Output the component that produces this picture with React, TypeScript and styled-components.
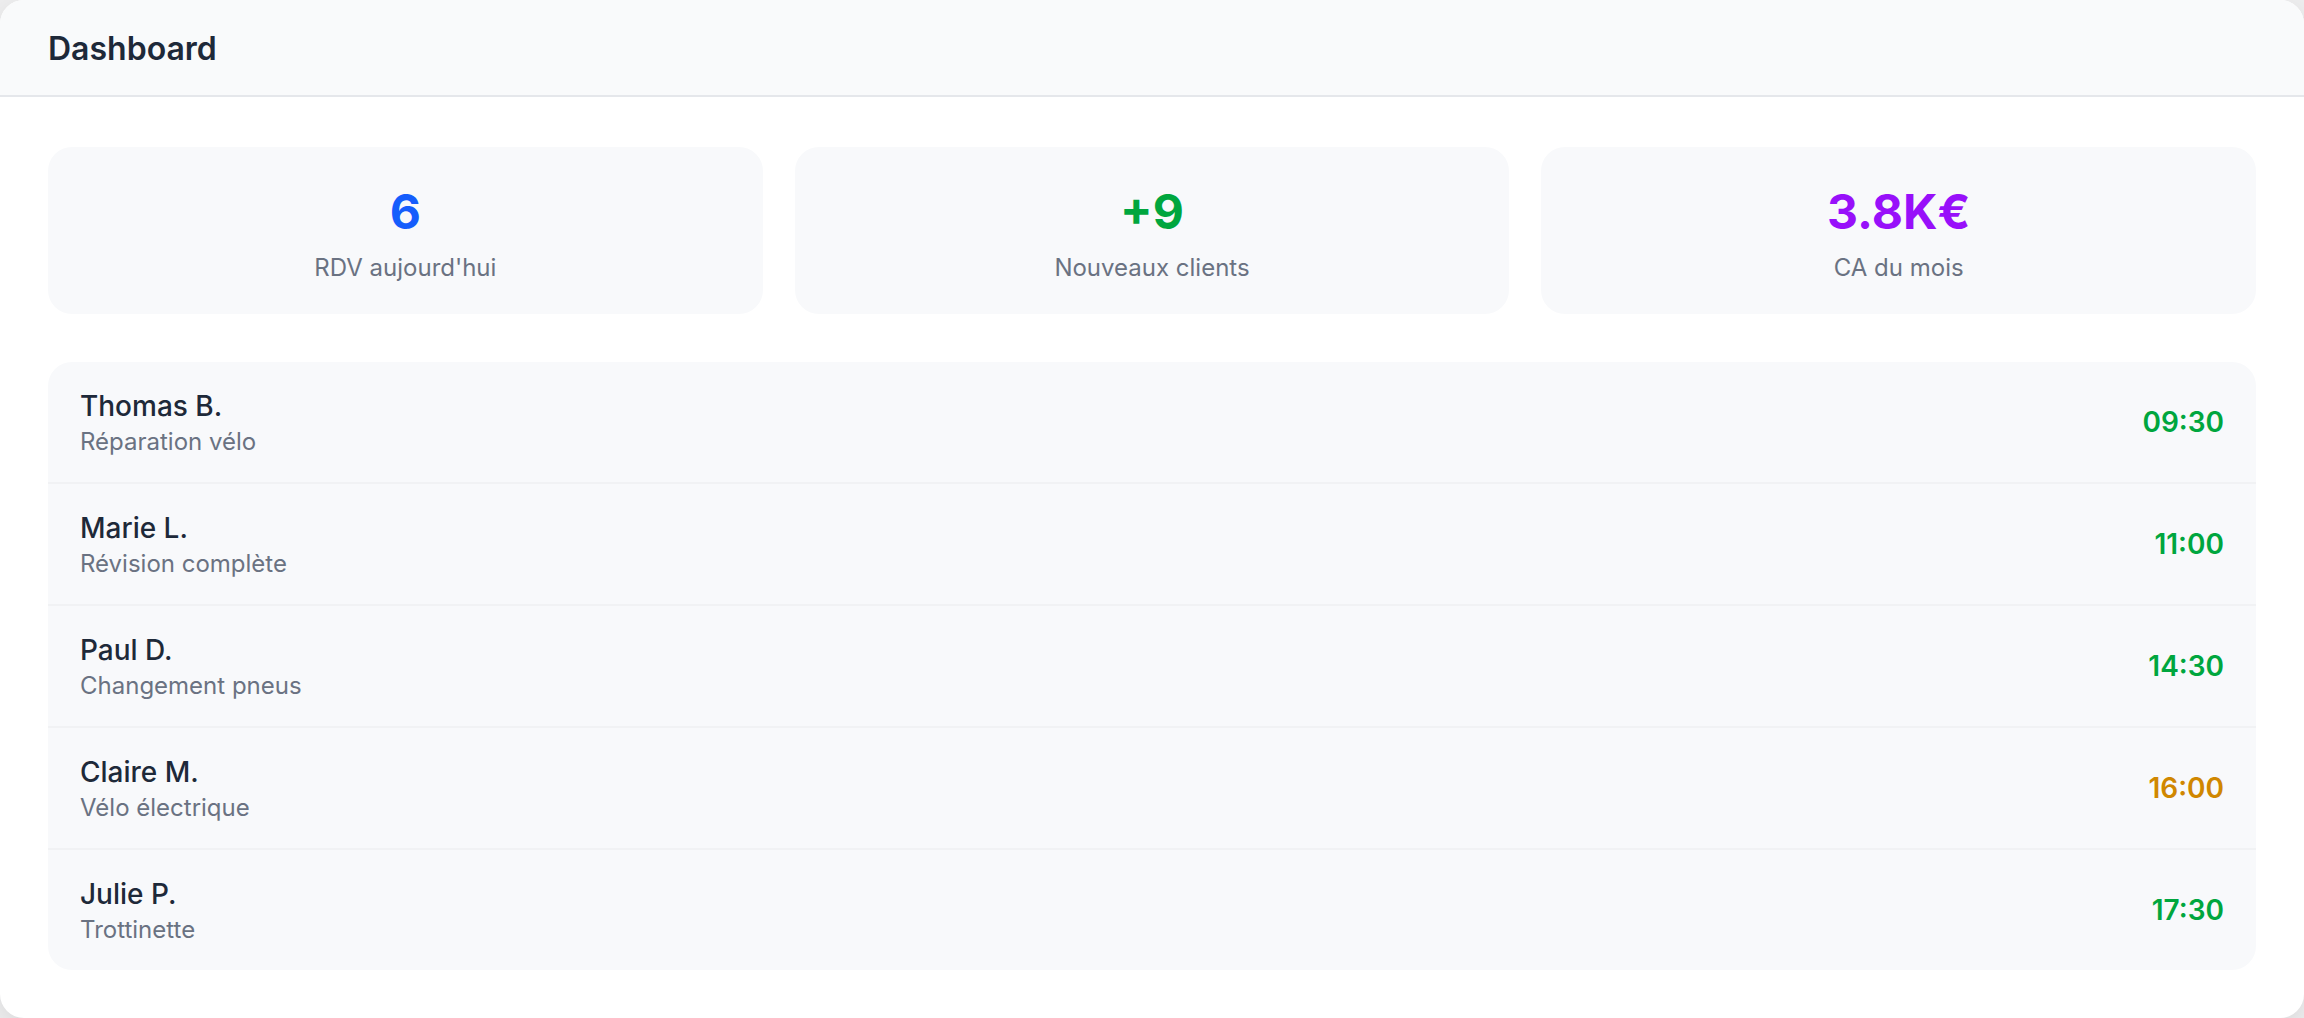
import React from "react"
import styled, { createGlobalStyle } from "styled-components"

const GlobalStyle = createGlobalStyle`
  * {
    box-sizing: border-box;
  }
  html, body {
    margin: 0;
    padding: 0;
    background: #ededee;
    font-family: Inter, "Noto Sans", "Liberation Sans", sans-serif;
    -webkit-font-smoothing: antialiased;
  }
`

interface Stat {
  value: string
  label: string
  color: string
}

interface Appointment {
  name: string
  service: string
  time: string
  color: string
}

const stats: Stat[] = [
  { value: "6", label: "RDV aujourd'hui", color: "#155dfc" },
  { value: "+9", label: "Nouveaux clients", color: "#00a63e" },
  { value: "3.8K€", label: "CA du mois", color: "#9810fa" },
]

const appointments: Appointment[] = [
  { name: "Thomas B.", service: "Réparation vélo", time: "09:30", color: "#00a63e" },
  { name: "Marie L.", service: "Révision complète", time: "11:00", color: "#00a63e" },
  { name: "Paul D.", service: "Changement pneus", time: "14:30", color: "#00a63e" },
  { name: "Claire M.", service: "Vélo électrique", time: "16:00", color: "#d08700" },
  { name: "Julie P.", service: "Trottinette", time: "17:30", color: "#00a63e" },
]

const Window = styled.div`
  width: 2304px;
  height: 1018px;
  background: #ffffff;
  border-radius: 24px;
  overflow: hidden;
  box-shadow: 0 8px 24px rgba(0, 0, 0, 0.08);
  display: flex;
  flex-direction: column;
`

const Header = styled.header`
  height: 97px;
  flex-shrink: 0;
  display: flex;
  align-items: center;
  padding: 2px 48px 0;
  background: #f9fafb;
  border-bottom: 2px solid #e5e7eb;
`

const Title = styled.h1`
  margin: 0;
  font-size: 32px;
  line-height: 48px;
  font-weight: 600;
  color: #1e2939;
`

const Content = styled.main`
  padding: 50px 48px 48px;
  display: flex;
  flex-direction: column;
  gap: 48px;
`

const StatGrid = styled.div`
  display: grid;
  grid-template-columns: repeat(3, 1fr);
  gap: 32px;
`

const StatCard = styled.div`
  background: #f8f9fb;
  border-radius: 24px;
  padding: 33px 32px 30px;
  display: flex;
  flex-direction: column;
  align-items: center;
  gap: 8px;
`

const StatValue = styled.div<{ $color: string }>`
  font-size: 48px;
  line-height: 64px;
  font-weight: 700;
  color: ${({ $color }) => $color};
`

const StatLabel = styled.div`
  font-size: 24px;
  line-height: 32px;
  color: #6a7282;
`

const List = styled.div`
  background: #f8f9fb;
  border-radius: 24px;
  overflow: hidden;
`

const Row = styled.div`
  display: flex;
  align-items: center;
  justify-content: space-between;
  padding: 24px 32px;
  border-bottom: 2px solid #f1f2f4;

  &:last-child {
    border-bottom: none;
  }
`

const Info = styled.div`
  display: flex;
  flex-direction: column;
`

const Name = styled.div`
  font-size: 28px;
  line-height: 40px;
  font-weight: 500;
  color: #1e2939;
`

const Service = styled.div`
  font-size: 24px;
  line-height: 32px;
  color: #6a7282;
`

const Time = styled.div<{ $color: string }>`
  font-size: 28px;
  line-height: 40px;
  font-weight: 600;
  color: ${({ $color }) => $color};
`

const App: React.FC = () => {
  return (
    <>
      <GlobalStyle />
      <Window>
        <Header>
          <Title>Dashboard</Title>
        </Header>
        <Content>
          <StatGrid>
            {stats.map((s) => (
              <StatCard key={s.label}>
                <StatValue $color={s.color}>{s.value}</StatValue>
                <StatLabel>{s.label}</StatLabel>
              </StatCard>
            ))}
          </StatGrid>
          <List>
            {appointments.map((a) => (
              <Row key={a.name}>
                <Info>
                  <Name>{a.name}</Name>
                  <Service>{a.service}</Service>
                </Info>
                <Time $color={a.color}>{a.time}</Time>
              </Row>
            ))}
          </List>
        </Content>
      </Window>
    </>
  )
}

export default App
